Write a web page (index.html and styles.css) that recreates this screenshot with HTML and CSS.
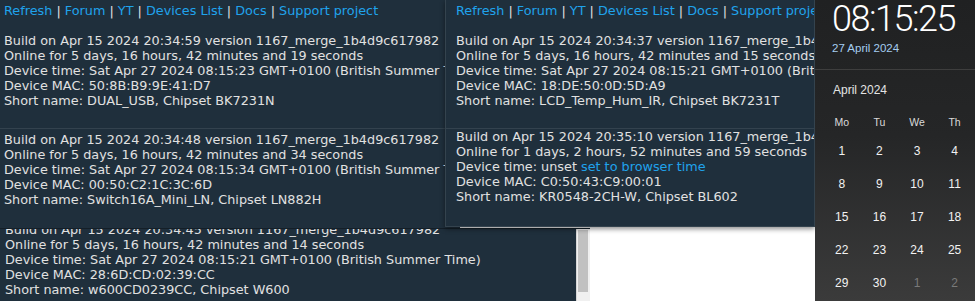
FILE: index.html
```html
<!DOCTYPE html>
<html lang="en">
<head>
<meta charset="utf-8">
<title>OpenBeken devices</title>
<link rel="stylesheet" href="styles.css">
</head>
<body>
<div class="desk">
  <section class="win win-a">
    <nav class="links"><a href="#">Refresh</a> | <a href="#">Forum</a> | <a href="#">YT</a> | <a href="#">Devices List</a> | <a href="#">Docs</a> | <a href="#">Support project</a></nav>
    <div class="dev dev-first">
      <div>Build on Apr 15 2024 20:34:59 version 1167_merge_1b4d9c617982</div>
      <div>Online for 5 days, 16 hours, 42 minutes and 19 seconds</div>
      <div>Device time: Sat Apr 27 2024 08:15:23 GMT+0100 (British Summer Time)</div>
      <div>Device MAC: 50:8B:B9:9E:41:D7</div>
      <div>Short name: DUAL_USB, Chipset BK7231N</div>
    </div>
    <div class="dev dev-next">
      <div>Build on Apr 15 2024 20:34:48 version 1167_merge_1b4d9c617982</div>
      <div>Online for 5 days, 16 hours, 42 minutes and 34 seconds</div>
      <div>Device time: Sat Apr 27 2024 08:15:34 GMT+0100 (British Summer Time)</div>
      <div>Device MAC: 00:50:C2:1C:3C:6D</div>
      <div>Short name: Switch16A_Mini_LN, Chipset LN882H</div>
    </div>
  </section>

  <section class="win win-b">
    <div class="win-b-body">
      <div class="dev dev-scrolled">
        <div>Build on Apr 15 2024 20:34:45 version 1167_merge_1b4d9c617982</div>
        <div>Online for 5 days, 16 hours, 42 minutes and 14 seconds</div>
        <div>Device time: Sat Apr 27 2024 08:15:21 GMT+0100 (British Summer Time)</div>
        <div>Device MAC: 28:6D:CD:02:39:CC</div>
        <div>Short name: w600CD0239CC, Chipset W600</div>
      </div>
    </div>
    <div class="scrollbar"><div class="thumb"></div></div>
  </section>

  <section class="win win-c">
    <nav class="links"><a href="#">Refresh</a> | <a href="#">Forum</a> | <a href="#">YT</a> | <a href="#">Devices List</a> | <a href="#">Docs</a> | <a href="#">Support project</a></nav>
    <div class="dev dev-first">
      <div>Build on Apr 15 2024 20:34:37 version 1167_merge_1b4d9c617982</div>
      <div>Online for 5 days, 16 hours, 42 minutes and 15 seconds</div>
      <div>Device time: Sat Apr 27 2024 08:15:21 GMT+0100 (British Summer Time)</div>
      <div>Device MAC: 18:DE:50:0D:5D:A9</div>
      <div>Short name: LCD_Temp_Hum_IR, Chipset BK7231T</div>
    </div>
    <div class="dev dev-next">
      <div>Build on Apr 15 2024 20:35:10 version 1167_merge_1b4d9c617982</div>
      <div>Online for 1 days, 2 hours, 52 minutes and 59 seconds</div>
      <div>Device time: unset <a href="#">set to browser time</a></div>
      <div>Device MAC: C0:50:43:C9:00:01</div>
      <div>Short name: KR0548-2CH-W, Chipset BL602</div>
    </div>
  </section>

  <aside class="flyout">
    <div class="clock-area">
      <div class="clock">08:15:25</div>
      <div class="date">27 April 2024</div>
    </div>
    <div class="cal">
      <div class="cal-title">April 2024</div>
      <div class="weekdays"><span>Mo</span><span>Tu</span><span>We</span><span>Th</span><span>Fr</span><span>Sa</span><span>Su</span></div>
      <div class="days">
        <span>1</span><span>2</span><span>3</span><span>4</span><span>5</span><span>6</span><span>7</span>
        <span>8</span><span>9</span><span>10</span><span>11</span><span>12</span><span>13</span><span>14</span>
        <span>15</span><span>16</span><span>17</span><span>18</span><span>19</span><span>20</span><span>21</span>
        <span>22</span><span>23</span><span>24</span><span>25</span><span>26</span><span>27</span><span>28</span>
        <span>29</span><span>30</span><span class="other">1</span><span class="other">2</span><span class="other">3</span><span class="other">4</span><span class="other">5</span>
      </div>
    </div>
  </aside>
</div>
</body>
</html>
```

FILE: styles.css
```css
* { box-sizing: border-box; margin: 0; padding: 0; }
html, body { width: 975px; height: 301px; overflow: hidden; }
body { background: #ffffff; font-family: "Liberation Sans", Arial, sans-serif; }

.desk { position: relative; width: 975px; height: 301px; overflow: hidden; }

/* device list windows */
.win {
  position: absolute;
  background: #1f2f3c;
  color: #e1e1e1;
  font-family: "DejaVu Sans", Verdana, sans-serif;
  font-size: 12.8px;
  line-height: 15px;
  white-space: nowrap;
  overflow: hidden;
}
.win a { color: #1fa3ec; text-decoration: none; }

.links { display: block; padding-top: 3px; }

.win-a { left: 0; top: 0; width: 460px; height: 228px; }
.win-a .links, .win-a .dev { padding-left: 4px; }
.win-a .dev-first { margin-top: 15px; }
.win-a .dev-next { margin-top: 20px; border-top: 1px solid #33424e; padding-top: 3px; }

.win-b {
  left: 0; top: 228px; width: 590px; height: 73px;
  border-top: 1px solid #141f28;
  display: flex;
}
.win-b-body { flex: 1; overflow: hidden; }
.win-b .dev { padding-left: 5px; }
.dev-scrolled { margin-top: -7px; }

.scrollbar {
  width: 14px;
  background: #f0f0f0;
  border-left: 1px solid #d6d6d6;
  padding: 1px 2px 0 1px;
}
.thumb { height: 62px; background: #c1c1c1; }

.win-c {
  left: 445px; top: 0; width: 370px; height: 227px;
  border: 1px solid #34434e;
  border-top: none;
  box-shadow: 0 2px 5px rgba(0, 0, 0, 0.45);
}
.win-c .links, .win-c .dev { padding-left: 10px; }
.win-c .dev-first { margin-top: 15px; }
.win-c .dev-next { margin-top: 20px; border-top: 1px solid #33424e; }

/* windows clock / calendar flyout */
.flyout {
  position: absolute;
  left: 815px; top: 0; width: 160px; height: 301px;
  background: linear-gradient(180deg, #202122 0%, #252627 45%, #3b3b3b 100%);
  color: #f0f0f0;
  overflow: hidden;
}
.clock-area { height: 71px; border-bottom: 1px solid #3e3e3e; padding: 0 0 0 17px; }
.clock {
  margin-top: -1px;
  font-family: Roboto, "Open Sans", sans-serif;
  font-weight: 300;
  font-size: 36px;
  line-height: 40px;
  letter-spacing: -1.5px;
  color: #ffffff;
}
.date { margin-top: 2px; font-size: 11.5px; line-height: 14px; color: #a5cdf0; }

.cal { padding: 12px 0 0 8px; }
.cal-title { padding-left: 10px; font-size: 12px; line-height: 16px; color: #e4e4e4; }
.weekdays, .days { display: grid; grid-template-columns: repeat(7, 37.6px); text-align: center; }
.weekdays { margin-top: 14px; font-size: 10.5px; line-height: 20px; color: #dadada; }
.days { margin-top: 3px; font-size: 12px; line-height: 33px; grid-auto-rows: 33px; color: #f2f2f2; }
.days .other { color: #7a7a7a; }
```
